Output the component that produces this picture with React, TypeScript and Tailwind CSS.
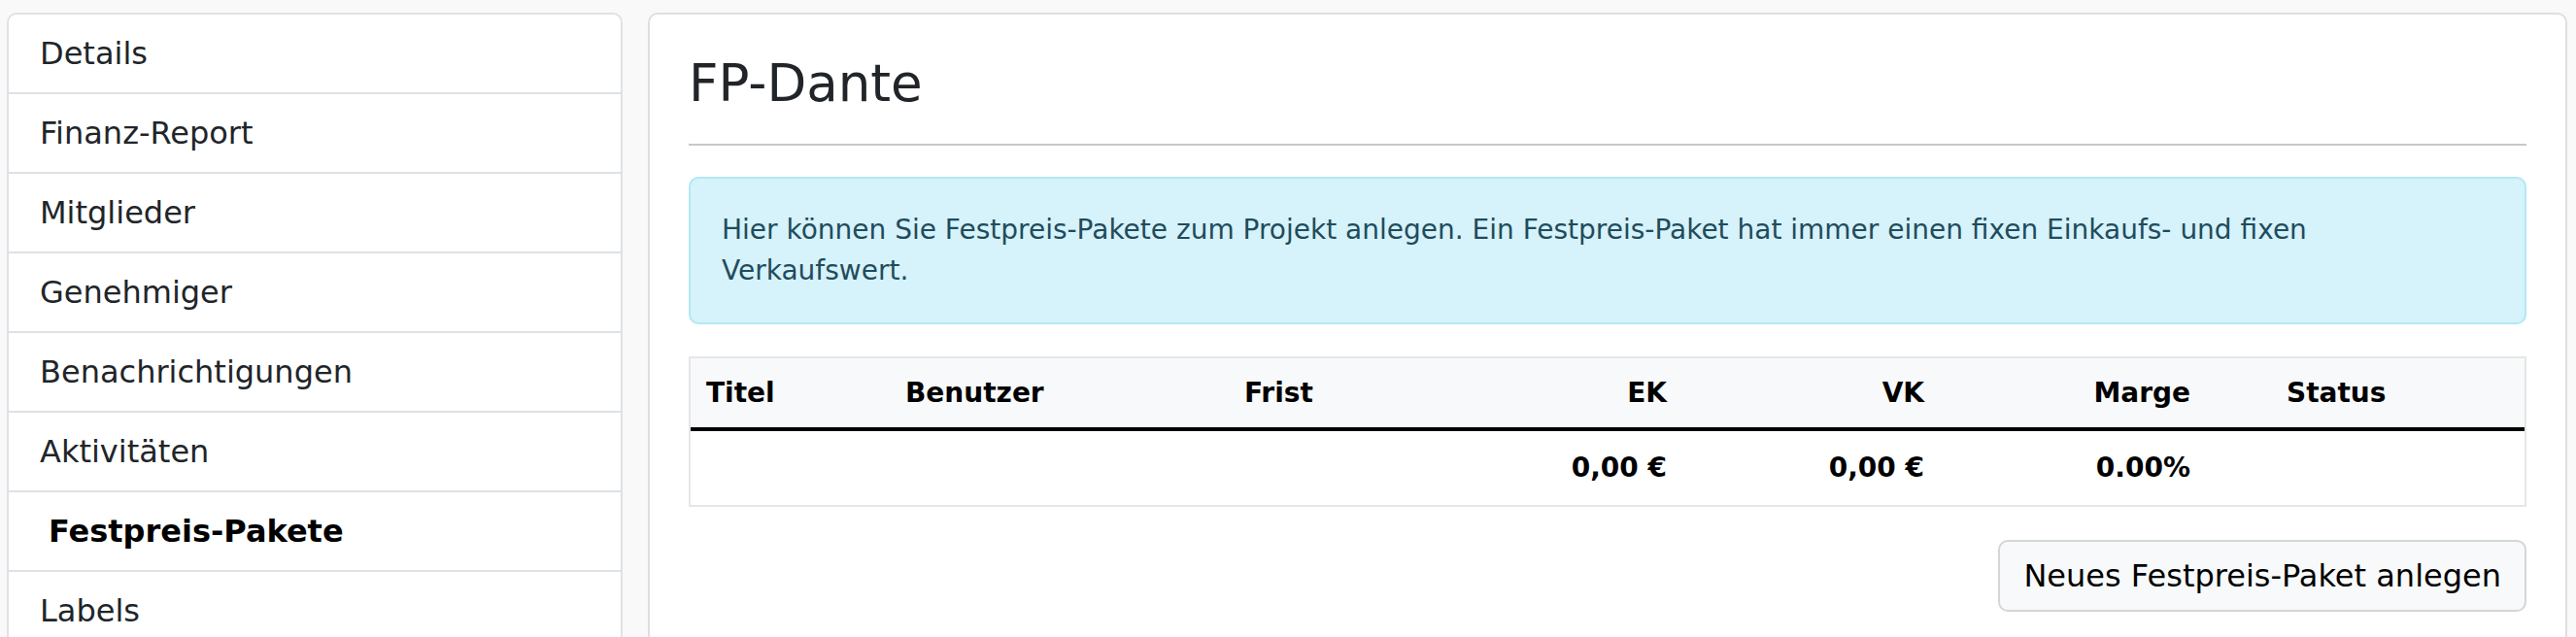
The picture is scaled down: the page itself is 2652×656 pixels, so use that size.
import React from 'react';

const navItems = [
  'Details',
  'Finanz-Report',
  'Mitglieder',
  'Genehmiger',
  'Benachrichtigungen',
  'Aktivitäten',
  'Festpreis-Pakete',
  'Labels',
];

const active = 'Festpreis-Pakete';

export default function App() {
  return (
    <div
      className="min-h-screen bg-[#f9f9f9] pt-[13px] pl-[7px] pr-[9px] flex gap-[26px] items-start text-[#212529]"
      style={{ fontFamily: '"DejaVu Sans", Verdana, sans-serif' }}
    >
      {/* Sidebar */}
      <div className="w-[634px] shrink-0 bg-white border-2 border-[#dee2e6] rounded-[10px] overflow-hidden">
        {navItems.map((item, i) => (
          <div
            key={item}
            className={
              (i > 0 ? 'border-t-2 border-[#dee2e6] ' : '') +
              (item === active
                ? 'pl-[41px] pr-8 py-4 text-[32px] leading-[48px] font-bold text-black'
                : 'px-8 py-4 text-[32px] leading-[48px]')
            }
          >
            {item}
          </div>
        ))}
      </div>

      {/* Main card */}
      <div className="flex-1 bg-white border-2 border-[#dfdfdf] rounded-[10px] px-10 pt-10 pb-12">
        <h1 className="text-[53px] leading-[62px] font-normal">FP-Dante</h1>
        <hr className="mt-[31px] border-t-2 border-[#c8c8c8]" />

        <div className="mt-8 bg-[#d6f2fa] border-2 border-[#b4e7f5] rounded-[10px] p-8 text-[28px] leading-[42px] text-[#1f4c5c]">
          Hier können Sie Festpreis-Pakete zum Projekt anlegen. Ein Festpreis-Paket hat immer einen fixen Einkaufs- und fixen
          <br />
          Verkaufswert.
        </div>

        {/* Table */}
        <div className="mt-[33px] border-2 border-[#e6e6e6] text-[28px] leading-[42px] text-black">
          <div className="grid grid-cols-[205px_349px_216px_251px_265px_341px_1fr] bg-[#f8f9fa] border-b-4 border-black font-bold h-[75px] items-center">
            <div className="px-4">Titel</div>
            <div className="px-4">Benutzer</div>
            <div className="px-4">Frist</div>
            <div className="px-4 text-right">EK</div>
            <div className="px-4 text-right">VK</div>
            <div className="pl-4 pr-[83px] text-right">Marge</div>
            <div className="px-4">Status</div>
          </div>
          <div className="grid grid-cols-[205px_349px_216px_251px_265px_341px_1fr] font-bold h-[76px] items-center">
            <div className="px-4"></div>
            <div className="px-4"></div>
            <div className="px-4"></div>
            <div className="px-4 text-right">0,00 €</div>
            <div className="px-4 text-right">0,00 €</div>
            <div className="pl-4 pr-[83px] text-right">0.00%</div>
            <div className="px-4"></div>
          </div>
        </div>

        <div className="mt-[34px] flex justify-end">
          <button className="bg-[#f8f9fa] border-2 border-[#d3d6d9] rounded-[10px] px-6 py-3 text-[32px] leading-[46px] text-black">
            Neues Festpreis-Paket anlegen
          </button>
        </div>
      </div>
    </div>
  );
}
